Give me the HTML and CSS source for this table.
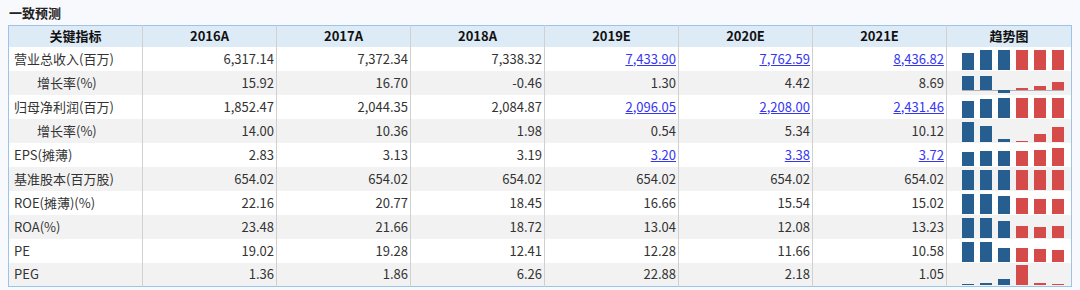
FILE: index.html
```html
<!DOCTYPE html>
<html lang="zh-CN">
<head>
    <meta charset="UTF-8">
    <title>一致预测</title>
    <link rel="stylesheet" href="styles.css">
</head>
<body>
    <div class="title">一致预测</div>

    <table class="forecast">
        <colgroup>
            <col class="c-name"><col class="c-year"><col class="c-year"><col class="c-year">
            <col class="c-year"><col class="c-year"><col class="c-year"><col>
        </colgroup>
        <thead>
            <tr>
                <th>关键指标</th>
                <th>2016A</th>
                <th>2017A</th>
                <th>2018A</th>
                <th>2019E</th>
                <th>2020E</th>
                <th>2021E</th>
                <th>趋势图</th>
            </tr>
        </thead>
        <tbody>
            <tr>
                <td class="name">营业总收入(百万)</td>
                <td>6,317.14</td><td>7,372.34</td><td>7,338.32</td>
                <td><a href="#">7,433.90</a></td><td><a href="#">7,762.59</a></td><td><a href="#">8,436.82</a></td>
                <td class="trend"><div class="chart">
                    <span class="bar act" style="height:17px"></span><span class="bar act" style="height:20px"></span><span class="bar act" style="height:20px"></span>
                    <span class="bar est" style="height:20px"></span><span class="bar est" style="height:20px"></span><span class="bar est" style="height:20px"></span>
                </div></td>
            </tr>
            <tr>
                <td class="name sub">增长率(%)</td>
                <td>15.92</td><td>16.70</td><td>-0.46</td>
                <td>1.30</td><td>4.42</td><td>8.69</td>
                <td class="trend"><div class="chart axis">
                    <span class="bar act" style="height:14px"></span><span class="bar act" style="height:14px"></span><span class="bar act neg" style="height:3px"></span>
                    <span class="bar est" style="height:2px"></span><span class="bar est" style="height:4px"></span><span class="bar est" style="height:8px"></span>
                </div></td>
            </tr>
            <tr>
                <td class="name">归母净利润(百万)</td>
                <td>1,852.47</td><td>2,044.35</td><td>2,084.87</td>
                <td><a href="#">2,096.05</a></td><td><a href="#">2,208.00</a></td><td><a href="#">2,431.46</a></td>
                <td class="trend"><div class="chart">
                    <span class="bar act" style="height:17px"></span><span class="bar act" style="height:19px"></span><span class="bar act" style="height:20px"></span>
                    <span class="bar est" style="height:20px"></span><span class="bar est" style="height:20px"></span><span class="bar est" style="height:20px"></span>
                </div></td>
            </tr>
            <tr>
                <td class="name sub">增长率(%)</td>
                <td>14.00</td><td>10.36</td><td>1.98</td>
                <td>0.54</td><td>5.34</td><td>10.12</td>
                <td class="trend"><div class="chart">
                    <span class="bar act" style="height:20px"></span><span class="bar act" style="height:16px"></span><span class="bar act" style="height:3px"></span>
                    <span class="bar est" style="height:1px"></span><span class="bar est" style="height:8px"></span><span class="bar est" style="height:15px"></span>
                </div></td>
            </tr>
            <tr>
                <td class="name">EPS(摊薄)</td>
                <td>2.83</td><td>3.13</td><td>3.19</td>
                <td><a href="#">3.20</a></td><td><a href="#">3.38</a></td><td><a href="#">3.72</a></td>
                <td class="trend"><div class="chart">
                    <span class="bar act" style="height:14px"></span><span class="bar act" style="height:15px"></span><span class="bar act" style="height:15px"></span>
                    <span class="bar est" style="height:15px"></span><span class="bar est" style="height:16px"></span><span class="bar est" style="height:18px"></span>
                </div></td>
            </tr>
            <tr>
                <td class="name">基准股本(百万股)</td>
                <td>654.02</td><td>654.02</td><td>654.02</td>
                <td>654.02</td><td>654.02</td><td>654.02</td>
                <td class="trend"><div class="chart">
                    <span class="bar act" style="height:20px"></span><span class="bar act" style="height:20px"></span><span class="bar act" style="height:20px"></span>
                    <span class="bar est" style="height:20px"></span><span class="bar est" style="height:20px"></span><span class="bar est" style="height:20px"></span>
                </div></td>
            </tr>
            <tr>
                <td class="name">ROE(摊薄)(%)</td>
                <td>22.16</td><td>20.77</td><td>18.45</td>
                <td>16.66</td><td>15.54</td><td>15.02</td>
                <td class="trend"><div class="chart">
                    <span class="bar act" style="height:20px"></span><span class="bar act" style="height:20px"></span><span class="bar act" style="height:18px"></span>
                    <span class="bar est" style="height:16px"></span><span class="bar est" style="height:15px"></span><span class="bar est" style="height:15px"></span>
                </div></td>
            </tr>
            <tr>
                <td class="name">ROA(%)</td>
                <td>23.48</td><td>21.66</td><td>18.72</td>
                <td>13.04</td><td>12.08</td><td>13.23</td>
                <td class="trend"><div class="chart">
                    <span class="bar act" style="height:20px"></span><span class="bar act" style="height:20px"></span><span class="bar act" style="height:17px"></span>
                    <span class="bar est" style="height:12px"></span><span class="bar est" style="height:11px"></span><span class="bar est" style="height:12px"></span>
                </div></td>
            </tr>
            <tr>
                <td class="name">PE</td>
                <td>19.02</td><td>19.28</td><td>12.41</td>
                <td>12.28</td><td>11.66</td><td>10.58</td>
                <td class="trend"><div class="chart">
                    <span class="bar act" style="height:20px"></span><span class="bar act" style="height:20px"></span><span class="bar act" style="height:14px"></span>
                    <span class="bar est" style="height:14px"></span><span class="bar est" style="height:13px"></span><span class="bar est" style="height:12px"></span>
                </div></td>
            </tr>
            <tr>
                <td class="name">PEG</td>
                <td>1.36</td><td>1.86</td><td>6.26</td>
                <td>22.88</td><td>2.18</td><td>1.05</td>
                <td class="trend"><div class="chart">
                    <span class="bar act" style="height:1px"></span><span class="bar act" style="height:2px"></span><span class="bar act" style="height:6px"></span>
                    <span class="bar est" style="height:20px"></span><span class="bar est" style="height:2px"></span><span class="bar est" style="height:1px"></span>
                </div></td>
            </tr>
        </tbody>
    </table>
</body>
</html>
```

FILE: styles.css
```css
body {
    margin: 0;
    padding: 0 8px;
    background-color: #f8f9fc;
    font-family: "Noto Sans CJK SC", "Noto Sans", sans-serif;
    font-size: 13px;
    color: #333;
}

.title {
    height: 25px;
    line-height: 25px;
    padding-left: 1px;
    font-weight: bold;
    color: #222;
}

.forecast {
    width: 1064px;
    table-layout: fixed;
    border-collapse: collapse;
    border: 1px solid #9dc3e6;
    background-color: #fff;
}

.c-name, .c-year {
    width: 134px;
}

.forecast thead tr {
    height: 21px;
}

.forecast tbody tr {
    height: 24px;
}

.forecast th {
    height: 21px;
    box-sizing: border-box;
    padding: 0;
    background-color: #ddebf7;
    border-left: 1px solid #d0d0d0;
    font-weight: bold;
    color: #111;
    text-align: center;
    line-height: 18px;
}

.forecast td {
    height: 24px;
    box-sizing: border-box;
    padding: 0 2px 0 0;
    border-left: 1px solid #d0d0d0;
    text-align: right;
    line-height: 18px;
    white-space: nowrap;
}

.forecast tbody tr:nth-child(even) td {
    background-color: #f2f2f2;
}

.forecast th:first-child,
.forecast td:first-child {
    border-left: none;
}

.forecast td.name {
    text-align: left;
    padding-left: 5px;
}

.forecast td.name.sub {
    padding-left: 28px;
}

.forecast a {
    color: #3535f2;
    text-decoration: underline;
}

.forecast td.trend {
    vertical-align: bottom;
    padding: 0 0 1px 15px;
    line-height: 0;
}

.chart {
    display: flex;
    align-items: flex-end;
    gap: 6px;
    height: 20px;
}

.chart.axis {
    width: 102px;
    height: 14px;
    margin-bottom: 3px;
    border-bottom: 1px solid #b0b0b0;
}

.bar {
    width: 12px;
    flex: none;
}

.bar.act {
    background-color: #265f8f;
}

.bar.est {
    background-color: #d44b49;
}

.bar.neg {
    margin-bottom: -3px;
}
```
